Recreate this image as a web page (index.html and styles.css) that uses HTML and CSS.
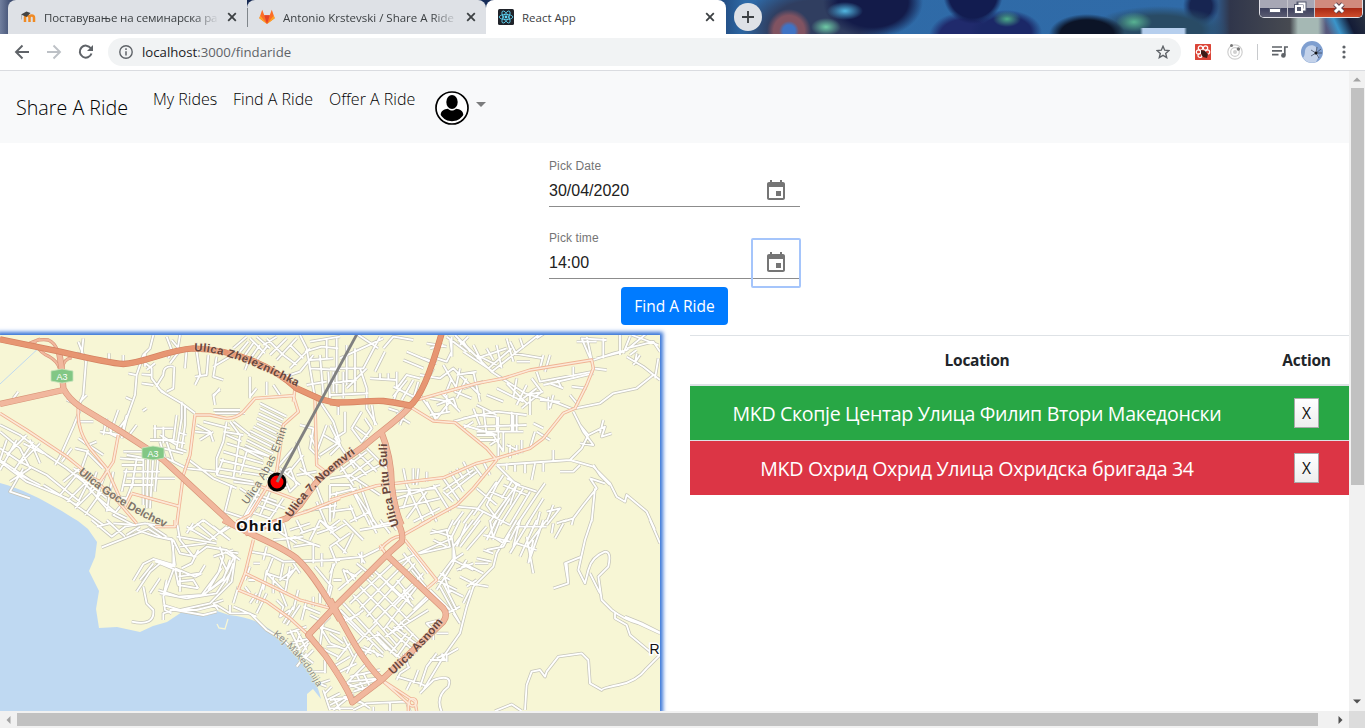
FILE: index.html
```html
<!DOCTYPE html>
<html lang="en">
<head>
<meta charset="utf-8">
<title>React App</title>
<link rel="stylesheet" href="styles.css">
</head>
<body>
<div class="window">
  <header class="tabstrip">
    <div class="tab tab-first">
      <svg class="favicon" viewBox="0 0 16 16"><path d="M5 13V8.800c0-3 4.500-3 4.500 0V13M9.500 8.800c0-3 4.500-3 4.500 0V13" fill="none" stroke="#f08a24" stroke-width="2.500"/><path d="M1 5.500 6.500 2.500l4 1.500-4 4z" fill="#444"/><path d="M1.500 5.500v5" stroke="#aaa" stroke-width=".8"/></svg>
      <span class="tab-title t1">Поставување на семинарска ра</span>
      <svg class="close" viewBox="0 0 10 10"><path d="M1.200 1.200 8.800 8.800M8.800 1.200 1.200 8.800"/></svg>
    </div>
    <div class="tab tab-second">
      <svg class="favicon" viewBox="0 0 16 16"><path d="M8 15 .3 9.300 3.200.800 5.300 6.300h5.400L12.800.800l2.900 8.500z" fill="#fc6d26"/><path d="m8 15 2.700-8.700H5.300z" fill="#e24329"/><path d="M8 15 .3 9.300l.9-2.800zM8 15l7.700-5.700-.9-2.800z" fill="#fca326"/></svg>
      <span class="tab-title t2">Antonio Krstevski / Share A Ride</span>
      <svg class="close" viewBox="0 0 10 10"><path d="M1.200 1.200 8.800 8.800M8.800 1.200 1.200 8.800"/></svg>
    </div>
    <div class="tab tab-active">
      <svg class="favicon" viewBox="0 0 16 16"><rect width="16" height="16" rx="1.500" fill="#20232a"/><g fill="none" stroke="#61dafb" stroke-width=".8"><ellipse cx="8" cy="8" rx="6.800" ry="2.600"/><ellipse cx="8" cy="8" rx="6.800" ry="2.600" transform="rotate(60 8 8)"/><ellipse cx="8" cy="8" rx="6.800" ry="2.600" transform="rotate(120 8 8)"/></g><circle cx="8" cy="8" r="1.400" fill="#61dafb"/></svg>
      <span class="tab-title t3">React App</span>
      <svg class="close" viewBox="0 0 10 10"><path d="M1.200 1.200 8.800 8.800M8.800 1.200 1.200 8.800"/></svg>
    </div>
    <div class="new-tab"><svg viewBox="0 0 12 12"><path d="M6 0v12M0 6h12"/></svg></div>
    <div class="controls">
      <span class="ctl"><svg width="27" height="17"><rect x="9.500" y="8.500" width="11" height="4" fill="#fff" stroke="#555a70"/></svg></span>
      <span class="ctl mid"><svg width="26" height="17"><path d="M10.500 3.500h6v6h-6zM8 6h6v6H8z" fill="#555a70" stroke="#555a70" stroke-width="4"/><path d="M10.500 3.500h6v6h-2M8 6h6v6H8z" fill="none" stroke="#fff" stroke-width="2"/></svg></span>
      <span class="ctl red"><svg width="47" height="17"><path d="m20 4 8 8M28 4l-8 8" stroke="#5f4650" stroke-width="5"/><path d="m20 4 8 8M28 4l-8 8" stroke="#fff" stroke-width="3"/></svg></span>
    </div>
  </header>

  <div class="toolbar">
    <svg class="nav-ico" viewBox="0 0 16 16"><path d="M15 8H2M8.500 1.500 2 8l6.500 6.500" fill="none" stroke="#5f6368" stroke-width="1.900"/></svg>
    <svg class="nav-ico" viewBox="0 0 16 16"><path d="M1 8h13M7.500 1.500 14 8l-6.500 6.500" fill="none" stroke="#bdc1c6" stroke-width="1.900"/></svg>
    <svg class="nav-ico" viewBox="0 0 16 16"><path d="M13.500 9.500A6 6 0 1 1 12.800 4.300" fill="none" stroke="#5f6368" stroke-width="2"/><path d="M15 1v6H9z" fill="#5f6368"/></svg>
    <div class="omnibox">
      <svg class="info" viewBox="0 0 14 14"><circle cx="7" cy="7" r="6.200" fill="none" stroke="#5f6368" stroke-width="1.400"/><path d="M7 6.200v4.200M7 3.300v1.700" stroke="#5f6368" stroke-width="1.500"/></svg>
      <span class="url"><b>localhost</b>:3000/findaride</span>
      <svg class="star" viewBox="0 0 14 14"><path d="m7 1.300 1.700 3.900 4.200.4-3.200 2.800 1 4.200L7 10.400l-3.700 2.200 1-4.200L1.100 5.600l4.200-.4z" fill="none" stroke="#5f6368" stroke-width="1.400"/></svg>
    </div>
    <svg class="ext-red" viewBox="0 0 16 16"><rect width="16" height="16" rx=".5" fill="#db4437"/><g fill="none" stroke="#fff" stroke-width="1.200"><circle cx="5.500" cy="4" r="2.200"/><circle cx="10.500" cy="4" r="2.200"/><circle cx="3.500" cy="8" r="2.200"/><circle cx="12.500" cy="8" r="2.200"/><circle cx="5" cy="11.500" r="2"/></g><path d="m6 6 4 1 3 3-1 4-4-1-2-3z" fill="#3c1c18"/></svg>
    <svg class="ext-orbit" viewBox="0 0 16 16"><circle cx="8" cy="8" r="7.200" fill="none" stroke="#cfcfcf" stroke-width="1.200"/><circle cx="8" cy="8" r="4.300" fill="none" stroke="#cfcfcf" stroke-width="1.200"/><circle cx="8" cy="8" r="2" fill="#d0d0d0"/><circle cx="4.500" cy="1.500" r="1.500" fill="#777"/><circle cx="11.400" cy="5" r="1.700" fill="#777"/></svg>
    <i class="sep"></i>
    <svg class="media" viewBox="0 0 16 12"><path d="M0 1h10M0 4.800h10M0 8.600h6.500M12.800 9V1H16" fill="none" stroke="#5f6368" stroke-width="1.700"/><circle cx="11.400" cy="9.400" r="2.300" fill="#5f6368"/></svg>
    <svg class="avatar" viewBox="0 0 22 22"><circle cx="11" cy="11" r="11" fill="#7f9fd0"/><path d="M2 17c3-4 1-7 3-10 2-3 7-4 10-1 2 3 0 5 3 9l-3 6c-5 2-10 0-13-4z" fill="#c3d2ea"/><path d="M15 12 10 9M15 12l-5 3M15 12l5-4M15 12l6 0M15 12l3 5M15 12l1-6" stroke="#333d55" stroke-width=".7"/><circle cx="15" cy="12" r="1.500" fill="#111"/></svg>
    <svg class="kebab" viewBox="0 0 4 14"><circle cx="2" cy="2" r="1.600"/><circle cx="2" cy="7" r="1.600"/><circle cx="2" cy="12" r="1.600"/></svg>
  </div>

  <div class="viewport">
    <main class="page">
      <nav class="navbar">
        <a class="brand">Share A Ride</a>
        <a class="link l1">My Rides</a>
        <a class="link l2">Find A Ride</a>
        <a class="link l3">Offer A Ride</a>
        <svg class="user" viewBox="0 0 34 34"><circle cx="17" cy="17" r="16" fill="#fff" stroke="#000" stroke-width="1.700"/><ellipse cx="17" cy="11" rx="5.700" ry="7"/><path d="M5.700 24c0-4 3.500-5.800 7.300-6.200 2 2.400 6 2.400 8 0 3.800.4 7.300 2.200 7.300 6.200-3 4.500-7 6.200-11.300 6.200S8.700 28.500 5.700 24z"/></svg>
        <i class="caret"></i>
      </nav>

      <form class="form">
        <div class="field"><label>Pick Date</label><span class="value">30/04/2020</span>
          <svg class="cal" viewBox="0 0 24 24"><path d="M17 12h-5v5h5v-5zM16 1v2H8V1H6v2H5c-1.110 0-1.990.9-1.990 2L3 19c0 1.100.89 2 2 2h14c1.100 0 2-.9 2-2V5c0-1.100-.9-2-2-2h-1V1h-2zm3 18H5V8h14v11z"/></svg></div>
        <div class="field"><label>Pick time</label><span class="value">14:00</span>
          <svg class="cal" viewBox="0 0 24 24"><path d="M17 12h-5v5h5v-5zM16 1v2H8V1H6v2H5c-1.110 0-1.990.9-1.990 2L3 19c0 1.100.89 2 2 2h14c1.100 0 2-.9 2-2V5c0-1.100-.9-2-2-2h-1V1h-2zm3 18H5V8h14v11z"/></svg><i class="focus"></i></div>
        <span class="submit">Find A Ride</span>
      </form>

      <section class="content">
        <div class="map">
<svg width="660" height="376" viewBox="0 335 660 376">
<defs>
<g id="streets">
 <!-- north-west -->
 <g transform="translate(0 325) scale(.33333)">
  <path d="M235 50l15 40 8 20-8 100-15 35M230 85l12 3M250 40l-5 50M460 30l-10 40-20 20-20 60-5 60-25 70-15 60M435 85v40M370 90v25M327 85v20M385 145l22 5M395 225l-18-8M500 35l15 40-10 25M540 30l-10 60M515 45l25 30-30 40M560 70l-5 60"/>
  <path d="M430 110l25 20v30l30 40 60 35 40 30M455 150l-30-2M425 175l35 5M520 125q-30-5-30 25l-22 35M500 200l20-10 3-65M475 190l20 15M440 135l25-20M590 80l10 70-15 30M625 90l-5 60-35 5M650 95l-10 60 30 10M690 95l-50 30M700 70l40-35M720 80l25-30M735 90l25-35M755 95l25-35M770 105l30-40M750 40l45 45M770 35l40 35M800 40l50 50M810 90l50-50M830 105l60-65M790 60l40-25M870 60l40 40M850 90l40 30M870 130l60-60M900 140l40-50M750 155v65M770 190l-20 25M800 170v40M820 180l20 30M750 95l-15 40"/>
  <path d="M900 30l20 40 10 60 15 90M930 50l90-15M915 80l50-15 50 5M980 40v60M1000 100l-70 5M930 130l90 5M960 90l10 120M985 140l5 80M1000 140v60M920 180l60-10M840 160l60-20M640 215l20-25M645 240l-5-30 20-15M545 230v50l-15 90 30 10M555 240v60l-10 70M530 270l-10 80M500 345l55 10M560 330l-25-8M465 300v40M490 305v50M460 310h60M450 345h70M640 255h80M645 265h90M440 250l-12 8"/>
  <path d="M585 320l50 5M590 300l40 20 10 30M600 345l40-25M610 290l80 20M680 290l-10 60-20 50v50M690 290l30 40M670 320l60 10M700 290l50 40M780 235l80 40M780 250l70 35M775 265l75 35M770 280l75 35M770 295l70 35M760 305l80 40M750 318l80 40M745 330l80 40M740 345l80 40M735 360l75 35M730 372l60 30M680 330l45 20M680 355l130 40M670 380l120 35M660 405l130 30M650 430l130 20M650 450l110 20M720 330l-20 130M740 380l-20 70M670 400l-20 50M700 470l80 10"/>
  <path d="M240 255l-20 50-40 90-15 25M215 370l-30 40M240 290h40M235 340l30 20 25-10M225 235l-25-10M40 220l15-20M265 375l-20 55M225 370l40 10M260 210l-20 20M355 255l-25 70 20 10M380 270l-15 60M325 290l10 40M300 320l60 10M320 280l-10 50M380 340l30-40M350 320l30-40M370 380h110M360 400l70 5M365 420h65M430 380v160M445 380l-5 170M460 390l-10 160M475 390l-10 110M380 390l60 10M410 400l-15 90M380 430l-15 70M370 440h110M380 460h145M370 480h90M490 370l60 15M500 400l40 20M480 350l15 50M500 350l20 60 40 20M560 400l80 60 70 30M560 430l90 10M480 330l50 30"/>
  <path d="M0 300l60 30 80 60 60 40 50 40 70 80 60 30M0 320l60 50 30 60-60 40M0 370l60 40 80 40 100 80M20 345l-20 60 90 60M50 345l-50 90M80 330l-60 60M100 350l-60 90 80 40M130 385l-60-30M90 345l30 70M120 355l-60 60M0 410l80 60 120 50 40 30 70 50M70 430l-40 70 60 20M130 480l100 60 40-80-50-30M180 510l50-60 60 40M200 530l60-60 60 50M225 550l60-60M255 570l50-70M240 430l-50 40M290 440l-20 60M320 435l-30 80 60 50M340 440l-20 120M380 520l-40 50 60 30M260 380l50 50M250 350l60 40M400 470l-20 50-60-10"/>
  <path d="M695 480l-20 80 60 20M720 490l60 40-40 60M750 500l80 30M790 430l40 20 40-20 20 50-20 20-20-50M800 460l60 30M780 490l-50 90M770 540l60 20M810 500l-30 70M850 520l-40 60M750 560l60 20M735 580l40-60 80 30M900 430l40 30 30 80M930 330l20 40M960 230l40 60 20 60M980 300l-30 80M890 350l30 100M900 300l40 10-10 60 30 30M970 330l50 30M960 390l60-40M890 450l60-10M860 450l50-60M830 430l50-60M900 480l-60-50M950 530l30 70M990 480v110M910 560l100-20"/>
 </g>
 <!-- north-east -->
 <g transform="translate(330 325) scale(.33333)">
  <path d="M0 130h100l50-95M20 40v165M85 30l60 40M30 100l130-60M50 60v120M0 175l80-10M0 210l115-5M90 130l20 60v60l30 50M110 130l-60 60M40 140v80M75 70v130M160 70l30-35 60 10M165 80l-30 60M120 160l80 5M150 145v20M175 145v20M200 140v50l30-40 40 10M190 215l40-50M190 185l60 30M200 200l-10 30 60 10M250 165l-35 60M265 170l-20 70M220 105l60 25M230 80l70 30M280 100l40 15M300 70l40-10M320 100l30 10 15-30-5-40M290 55l60 10M365 35v60M350 35l60 45"/>
  <path d="M375 30l110 110 100 65 100 30 50 20M400 80l90 60M485 140l140-110M440 100l90-30M430 60l30 60M470 70l20 35M500 60l15 70M475 130l70-60M530 40l20 70M560 90l-20-40M580 70l-10-30M550 85l90 15M560 110h40M620 40l30-20M440 90l60 30M390 60l25-25M385 45l50 45M420 80l-20-30M270 150l60 10 40-30 80 80M310 130l-30 60M340 120l40 70M365 160l-20 50M390 130l-15 70 50 20M410 160l-30 60M380 150l60-10M400 190l60-20M330 200l60 60M300 220l60 10-40 50M290 230l30 60M350 210v50M270 210l50 70M320 240l50-20 10 30M300 270l60-10M370 290l70-20 60 5M400 280l100-20 90 10M440 240l60 30M430 140l20 90M470 210l50 20M500 190l80 40M530 175l60 60M560 160l-10 60M590 180l-30 60M620 190l-40 30M640 200l-50 10M605 160l30 40-60 50M600 210v60M630 225l60 5M655 215v40M670 210l-10 40"/>
  <path d="M440 305l150-5M500 275v45h60v-50M550 270v50M505 275v130M440 320h140M520 320v60M545 260v60M400 300l100 30M440 330h50M450 345h45M490 330l30 50M530 360l40 20M540 360v40M560 360v30M575 345v40M600 370l15-50M640 310l-30-15M660 345l-40-25M430 250l20 50M460 250l10 80M400 310l30-20M480 360l30-20M620 140l10 30 160-30M660 90l-15 50M640 90l-10 40M730 125v30M640 180l150-35M660 175l40 15M680 160l15 30M725 185l45 5M720 210l25 30M790 130l40 5M785 110l-30-70 75 5M770 35l15 70M740 50h60M820 40v60M790 105l60-20 40-10 60-50M800 100l80-20M870 30v60M890 70l80-20 20 30M900 35l-20 50M905 30l80 30M890 95l50 30 50 40M900 90l20-15M915 115l5-30M985 100l-10 60M970 150l-50 40-70 15-40 30-75 15M930 90l-20 30"/>
  <path d="M730 260l30 60 30 40-40-5M750 300l25 30 50-25-10 30 30-10M820 285l-10 40M775 330l-20 40-35 35-220 15M670 375v35M690 440h40l20-20M640 410v30M615 415l-10 50M585 415v30M555 420v20M530 415v20M720 405l70 20 50 50 20 40 25 15 5-20 60 50 25 55M790 420l20 30 30 30M780 460l45 15M780 460l20 30-40 50-30 40-5 20M795 490l-10 100M700 590l30-10M500 420l60 60 60 20M520 450l-20 30M530 460l40 20M520 480l70 30M560 480l-20 60M545 470l-30 50M620 510l25-35M620 510l-60 90M600 500l-60 100M640 520l-50 80M580 490l-70 110M560 480l-80 110M540 520l-50 80M500 480l-30 60 30 40M480 500l50 20M430 570l70-100M440 490l60 50M380 545l60 5 100 50M400 560l-30 40M430 555l-30 40M460 560l-30 40M650 560l40-10-40 50M670 540l-20 50M630 560l-10 40"/>
  <path d="M0 300l30 60-30 30M45 260v60l-30 20 60 90M65 310l30-50M65 310l30 40 30-40-20-30M75 305l40 30M25 240v30M125 240l10 60M175 250l30 10M200 270l40-30M200 270l40 25M210 300l15-40M110 370l60 60M80 380l60 60M60 400l50 50M30 420l40 60M110 380l-80 60M130 400l-80 60M150 420l-90 50M0 460l60-10 90 60M0 480h60l80 120M0 510l80-20M60 480l60 120M60 540l20 50M90 480l40 110M0 560l70-10M120 560l-60 30M20 500l-10 80M220 430l10 50 50 110M250 430v50M265 430l-5 50M290 440v30M200 520l130-40M200 550l130-30M190 500l130-10M270 490l50 100M310 480l50 80M340 500l30 30M240 490l-20 60M290 500l-60 80M250 590l80-40M340 495l90-60M350 510l90-70M340 460l50 70M360 440l40 60M380 430l20 30M400 410l20 40M430 420l30 40M460 410l20 40"/>
 </g>
 <!-- south-west -->
 <g transform="translate(0 520) scale(.33333)">
  <path d="M275 0l60 50 40-30 60-10 60 10M305 82l140-55 40 25 30 5 10 80M320 0l55 50M340 10l70 5M290 20l40-10M380 45l40-25M410 30l60 20 50 10M440 10l60 40M530 0l10 60 40 50 40-30 60 10 40 30M530 50l120 20M560 20l70 40 50-40M590 10l60 50M610 0l80 60M520 60l20 40 50 10M540 80l80-10M570 30l40-30M640 20l50 40M660 40l30-20M520 75v60l-60-18-30 15-30 50M460 130l-40 50M410 215l40-60 30-25 60 25v60M525 145l10 50 60 10M525 145l60 25 20-10M520 150l-30 80 5 40 20 10M500 180l-10 50M480 175l-20 30-10 15M430 200l10 50 20 20q5 50-65 35M480 220l30 5 50 10 50-10 60-50 30-60M530 185l50-5 15 25M615 135l-15 25-65 10M660 80l10 30-15 50-30 50M675 95l30 20-10 70-50 50M690 95l25 5M640 110l60-20M690 120l-20 60-40 30M700 130l-20 60M690 160l-40 60-60 10M660 110l20 40M650 230l-20 20-90 20-50-15M670 240l-30 10 15 20M525 270l85 15 40-10M510 270h80l60-15M525 140l-60-15M475 210l60 20 70-5 60-80M545 145l30-15 20-40M700 250l15-50M690 255v25l60 0 50 50 50 30M700 260l70 30M650 255l40 25M490 300v-20l30-10M560 40l20-30"/>
  <path d="M750 95l60 10 40 20 170-5M800 80l-10 40M820 60l90-10M830 30l60 40M850 10l20 80M870 30l60-20M880 80l60-10M890 0l20 40M900 40l60-20M880 50l80 30M930 60l30-60M940 70v60M965 100v40M990 80l20 50M950 40l60-20M960 0l60 60M980 30l40-30M1000 30l-40-30M780 130h-20M820 110l-20 50 60 20 30-40M800 150l-10 60M800 160l60 60M850 130l-10 50 40-30M870 140l-15 80M750 140l-15 40M745 180l20 0M750 220l-15-20M790 190l-20 60M820 170v50M840 210l20 50M770 220l-20 30M800 220l-30 60M830 240l20 20-10 30 30-20M880 130l20 30M895 210l-15 60M880 260l-30 50M900 255l-40 60M920 240l-15 60M910 260l50 20M940 230v30M960 220v30M945 140l50 60-15 60M1000 130l-20 110M930 285l40 20-10 70M990 290l-30 30 30 50M960 320l60 20M980 380l40 0M955 380l60 30M860 340l60-20M840 350l30 30M870 330l30 60M890 330l30 60M870 370l60-15M880 400l60-50M910 420l30-30M920 400l-30 40M940 430l-40-30M900 340l-20 60M925 370l-20 30M975 420v40M930 455h45M980 500l-25-10M975 520l20-20M980 540l40-20M970 510l20 60M1000 530l20 40M960 490l30-10"/>
 </g>
 <!-- south-east -->
 <g transform="translate(330 520) scale(.33333)">
  <path d="M0 40l50-30M40 0l60 60M0 80l60-40M20 70l30 30M70 40l-30 60M0 120l100-10 60-30M95 95v35M85 100l20 30M120 0l20 40M150 0l30 40M180 0l20 30M130 20l80-20M90 30l120-20M0 160l15-30M10 180h25M50 150l25 30M55 190l-15-40 40 20M80 130l50 40M25 210l70-60M50 230l100-110M60 250l140-130M90 265l150-150M110 290l145-160M130 310l150-150M130 150l120 110M110 175l130 130M90 200l130 130M70 225l130 150M40 250l130 140M30 270l130 130M160 330l100-130M180 340l120-110M165 350l130-80M170 190l40 40M200 180l50 60M250 200l-60 60M240 250l-20-40M250 270l50-50M140 335l60 60M140 350l60 60M150 370l70 50M170 320l90 80M190 320l80 60M200 410l50-70M180 400l50-60M220 420l40-50M210 305l60 60M110 360l40-20M130 370l-30 40M130 390l15 20M100 380l60 30M40 290l60 60M30 310l60-30M60 300l40-30M80 370l60-60"/>
  <path d="M220 100l60 80M245 150l50 60M260 100l-60 30M235 80l60 80M265 100l90-40M300 40l50-10 10 50-90 20M310 60l40 20M305 30l60 20 10 60-60 80M370 0l-20 40M390 0l-30 60M430 0l-60 80v50l-50 80M450 0l-60 80M410 10l-30 70M470 20l-60 70M500 0l-30 60M480 0l10 60M460 45l80 20M510 0l-20 50 30 20M540 40l-20 40-50 10M560 0l-60 100-10 40-60 60-20 60-20 80-50 70-60 100M490 100l-30-10M485 125l-45-10M460 160l-60-30M430 130l-50 20M400 100l-30 20 60 30M410 120l-20 30M435 130h40M390 170l40 20M420 190l55 10M440 180l-30 20M400 230l-40-20M420 210l-20 40M330 200l60 110M340 190l40 80M340 160l20 60M360 180l-30-20M390 260l-40 20M300 210l60 60M320 180l60 30M390 310l-20-30M320 340h35M310 360v-30l-20-20 40-10M300 420l45 0-10-20M350 425v-20l35-20M350 400l-30 15M270 500l20-60 30-40M200 470l70 20 20 10M230 510l15-30M265 450l-15 40M240 440l-30 20-10 20M220 400l15 40M270 520l40-40q60-20 45 20-40 30-20 75M110 430l-60 60 50 20M60 470l90-20M55 485l90-10M60 500l80-20M70 515l60-20M80 465l20 40M100 460l20 40M70 570l40-20 120-5M100 550l-60-20M130 560v20M180 550v25M230 545l10 30M0 555l60-30 60 40M0 565h70M0 540l70-10M10 570l60-50M0 340l40 30M0 370l50 20M40 350l30 60M60 370l-40 50M10 440l50-30M20 460l60-30M80 400l-30 60M75 380l50 20"/>
  <path d="M600 0l-60 100M620 0l-50 110M640 0l-45 130M570 0l-20 80M590 50l20 110M610 60l-15 70M650 0l-60 80M620 90l-60-20M540 60l20-40 90 0M670 10l-5 30M700 10l-25 45M680 10l30-10M785 0l-20 60-20 90 20 40 10-40q10-40 50-55 20 0 10 45l-30 30 10 70 30 30q40 30 80 40l65 30M755 110l-50 20 10 60-45 15M710 130l5 60M780 160l30 60M855 280v15l35 20 10 30 60 50M885 290l50 20 60 30M960 0l30 70M990 405l-40 40q-30 40-85 50-50 10-50 15l-35-20-5-70-20-20-70 10-35 45-5 15-15-20-25 5-15 40-5 75M495 573l50-20 30 20"/>
 </g>
</g>
<g id="locals">
 <g transform="translate(0 325) scale(.33333)"><path d="M0 265l80 50 120 80 50 40 100 90 60 70M235 245c-5 60 15 95 35 125l50 60 40 90M355 330l-15 80-40 60-60-30M585 270l-15 120-20 60-20 150M585 270h45l50 10q30 0 50-20l35-40 115-8 15 48-45 40-20 140-80 130-40 20M885 190l-5 40M945 225l5 195 40 30M770 480l120 45M790 600l130-40 100-40M395 505l145 40M395 505l-20 40"/></g>
 <g transform="translate(330 325) scale(.33333)"><path d="M0 525l140-43 200-24 100-43 60-15 100-30 40-30 60-75 35-15 35-70 20-50-5-25-185 30-80 25-80 15-110 30-70 20M240 245l70 43 65 5 95 77 30 35-70 85-50 50-110 60"/></g>
 <g transform="translate(0 520) scale(.33333)"><path d="M760 60l-25 100-20 50M735 160l165 80 110 30M715 210l85 35 70 50 55 50M525 0v20h-60"/></g>
 <g transform="translate(330 520) scale(.33333)"><path d="M220 45L300 0M225 60l95 120-35 30M150 90q30-40 65-42M150 75l20 30M155 480l80 70v25M155 480l100 65 5 28"/><circle cx="248" cy="547" r="11"/></g>
</g>
<g id="ramps"><g transform="translate(0 325) scale(.33333)"><path d="M80 60q30-20 65-15c35 15 33 65 38 85M105 58q-5-10 15-16M108 60q15 25 40 35 25 15 30 35M215 98q-25 5-27 30"/></g></g>
<g id="arterials">
 <g transform="translate(0 325) scale(.33333)"><path d="M0 237l190-42M178 85l7 45 5 60q15 30 50 55l120 73 80 52 50 35 210 195M1000 430c-50 30-70 70-100 110l-40 40-125 45"/></g>
 <g transform="translate(330 325) scale(.33333)"><path d="M240 245c-40 45-90 75-140 120L0 435M152 315c18 45 33 105 33 165 5 50 20 100 30 120"/></g>
 <g transform="translate(0 520) scale(.33333)"><path d="M670 0l90 45q90 40 130 70c50 45 100 135 130 185"/></g>
 <g transform="translate(330 520) scale(.33333)"><path d="M0 238c60 112 95 182 155 242M205 10c10 20 15 40 10 55l-45 40L20 255l-85 90 50 60C30 470 60 520 67 547l88-67 185-175q15-20 0-40L170 105"/></g>
</g>
<g id="trunk">
 <g transform="translate(0 325) scale(.33333)"><path d="M0 43l180 37q150 35 190 37c60-2 130-42 210-47 120 5 220 40 310 120l70 32 60 15"/></g>
 <g transform="translate(330 325) scale(.33333)"><path d="M0 232c60 3 120-7 160-4 40 4 60 10 80 14 30-22 60-92 95-217"/></g>
</g>
<path id="p1" d="M194 351C222 352 252 363 305 391"/>
<path id="p2" d="M78 473C103 495 130 512 168 529"/>
<path id="p3" d="M247 505Q275 470 288 424"/>
<path id="p4" d="M291 518C310 490 330 472 359 451"/>
<path id="p5" d="M399 525Q386 490 387 438"/>
<path id="p6" d="M273 635Q300 655 319 690"/>
<path id="p7" d="M393 675Q419 652 445 620"/>
</defs>
<rect x="0" y="335" width="660" height="376" fill="#f7f6d5"/>
<path d="M0 384 42 345" stroke="#bfd9ef"/>
<path d="M0 483C28 490 57 508 78 521l10 8 9 13-2 15-6 14 10 20-3 18 3 19 18-1 23 5 13-6 14-4 15-10 24 4 11-5 12 4c31 3 46 16 65 36 15 16 25 36 27 48l-8-10-6 5v17H0z" fill="#bfd9f2"/>
<path d="M217 624l2 4 6 1 3-10" fill="none" stroke="#f7f6d5" stroke-width="1.300"/>
<use href="#streets" class="street-edge"/><use href="#streets" class="street-fill"/>
<use href="#locals" class="local-edge"/><use href="#locals" class="local-fill"/>
<use href="#ramps" class="ramp-edge"/><use href="#ramps" class="ramp-fill"/>
<use href="#arterials" class="art-edge"/><use href="#arterials" class="art-fill"/>
<use href="#trunk" class="trunk-edge"/><use href="#trunk" class="trunk-fill"/>
<g class="shield"><path d="m51 371 11-2 11 2v10l-11 2-11-2zM142 448l11-2 11 2v10l-11 2-11-2z"/><text x="62" y="380">A3</text><text x="153" y="457">A3</text></g>
<g class="road-names">
 <text class="dark"><textPath href="#p1" textLength="110">Ulica Zheleznichka</textPath></text>
 <text><textPath href="#p2" textLength="103">Ulica Goce Delchev</textPath></text>
 <text class="thin"><textPath href="#p3" textLength="87">Ulica Abas Emin</textPath></text>
 <text class="dark"><textPath href="#p4" textLength="92">Ulica 7. Noemvri</textPath></text>
 <text class="dark"><textPath href="#p5" textLength="83">Ulica Pitu Guli</textPath></text>
 <text class="thin small"><textPath href="#p6" textLength="69">Kej Makedonija</textPath></text>
 <text class="dark"><textPath href="#p7" textLength="73">Ulica Asnom</textPath></text>
</g>
<text class="city" x="236" y="531" textLength="46">Ohrid</text>
<text class="village" x="649.500" y="654">R</text>
<circle cx="277" cy="482" r="8" fill="#f00" stroke="#000" stroke-width="3"/>
<path d="M277 482 357 334" stroke="#808080" stroke-width="2.800"/>
</svg>
        </div>
        <table class="places">
          <thead><tr><th class="where">Location</th><th>Action</th></tr></thead>
          <tbody>
            <tr class="from"><td class="addr">MKD Скопје Центар Улица Филип Втори Македонски</td><td><span class="remove">X</span></td></tr>
            <tr class="to"><td class="addr">MKD Охрид Охрид Улица Охридска бригада 34</td><td><span class="remove">X</span></td></tr>
          </tbody>
        </table>
      </section>
    </main>
    <div class="vbar"><svg class="arr" viewBox="0 0 8 5"><path d="M0 4.500 4 .5l4 4z" fill="#a3a3a3"/></svg><i class="vthumb"></i><svg class="arr" viewBox="0 0 8 5"><path d="M0 .5h8l-4 4z" fill="#505050"/></svg></div>
    <div class="hbar"><svg class="arh" viewBox="0 0 5 8"><path d="M4.500 0v8l-4-4z" fill="#a3a3a3"/></svg><i class="hthumb"></i><svg class="arh" viewBox="0 0 5 8"><path d="M.5 0v8l4-4z" fill="#505050"/></svg></div>
    <div class="corner"></div>
  </div>
</div>
</body>
</html>
```

FILE: styles.css
```css
* { box-sizing: border-box; }
body { margin: 0; background: #fff; font-family: "Open Sans", "Noto Sans", sans-serif; color: #212529; overflow: hidden; }
svg { display: block; flex: none; }
.window { width: 1365px; height: 728px; display: flex; flex-direction: column; overflow: hidden; }

/* Tab strip over the desktop wallpaper */
.tabstrip {
  height: 34px; flex: none; display: flex; padding-left: 8px;
  background:
    radial-gradient(ellipse 18px 9px at 845px 11px, #52b8e2, transparent),
    radial-gradient(ellipse 15px 9px at 826px 27px, #6fcba6, transparent),
    radial-gradient(circle 10px at 789px 31px, #3f73c4 60%, transparent),
    radial-gradient(circle 22px at 789px 31px, #815361 70%, transparent),
    radial-gradient(ellipse 50px 36px at 873px 2px, #131b49 70%, transparent),
    radial-gradient(ellipse 75px 46px at 815px 28px, #303e60 60%, transparent),
    radial-gradient(circle 30px at 973px -6px, #121c50 80%, transparent),
    radial-gradient(ellipse 14px 8px at 1007px 19px, #4cab88, transparent),
    radial-gradient(ellipse 36px 22px at 1006px 32px, #1b2867 70%, transparent),
    radial-gradient(ellipse 36px 24px at 965px 36px, #202a6c 70%, transparent),
    radial-gradient(ellipse 38px 20px at 1087px 34px, #0c1427 70%, transparent),
    linear-gradient(90deg, transparent 1140px, #b6cfee 1143px, #b6cfee 1184px, transparent 1187px) 0 28px / 100% 6px no-repeat,
    radial-gradient(ellipse 18px 10px at 1134px 22px, #58b292, transparent),
    radial-gradient(ellipse 70px 24px at 1160px 30px, #294b65 60%, transparent),
    radial-gradient(ellipse 18px 20px at 1201px 6px, #172551 60%, transparent),
    linear-gradient(65deg, transparent 1205px, #3b95ca 1215px, #141c37 1228px, #303844 1250px, #3b4350 1284px, transparent 1285px),
    linear-gradient(90deg, #717f9e 0, #16254c 20px, #17305e 700px, #2e6aa7 745px, #306ba8 1210px, #30364b 1230px, #474a51 1290px, #a5b8b4 1298px, #a5b8b4 1318px, #57597d 1326px, #5c5d83 1365px);
}
.tab { display: flex; align-items: center; height: 34px; background: #dee1e6; padding: 0 10px 0 12px; }
.tab-first { width: 239px; border-top-left-radius: 8px; position: relative; }
.tab-first::after { content: ""; position: absolute; right: -1px; top: 8px; width: 1px; height: 19px; background: #80868b; }
.tab-second { width: 239px; border-radius: 8px 8px 0 0; }
.tab-active { width: 240px; background: #fff; border-radius: 8px 8px 0 0; }
.favicon { width: 16px; height: 16px; }
.tab-title { flex: 1; margin-left: 8px; font-size: 11.5px; line-height: 17px; white-space: nowrap; overflow: hidden; color: #3c4043; }
.t1 { letter-spacing: -.13px; }
.t1, .t2 { -webkit-mask-image: linear-gradient(90deg, #000 calc(100% - 26px), transparent); mask-image: linear-gradient(90deg, #000 calc(100% - 26px), transparent); margin-right: 8px; }
.close { width: 10px; height: 10px; fill: none; stroke: #3c4043; stroke-width: 1.8; }
.tab-active .close { margin-right: 1px; }
.new-tab { width: 28px; height: 28px; margin: 3px 0 0 8px; border-radius: 50%; background: #dee1e6; display: grid; place-items: center; }
.new-tab svg { width: 12px; height: 12px; stroke: #3c4043; stroke-width: 1.9; }
.controls { margin-left: auto; margin-right: 2px; height: 18px; display: flex; border: 1px solid #e0e0e7; border-top: 0; border-radius: 0 0 5px 5px; overflow: hidden; }
.ctl { height: 17px; background: linear-gradient(#a7a7b5 45%, #3c3f5c 50%, #5a5c72); }
.mid { border-left: 1px solid #c4c4cc; border-right: 1px solid #c4c4cc; }
.red { background: linear-gradient(#d18b7d 45%, #a92a15 50%, #cf4d2c); }

/* Toolbar */
.toolbar { height: 37px; flex: none; display: flex; align-items: center; background: #fff; border-bottom: 1px solid #dadce0; padding-left: 14px; }
.nav-ico { width: 16px; height: 16px; margin-right: 16px; }
.omnibox { width: 1073px; height: 28px; margin-left: -2px; border-radius: 14px; background: #f1f3f4; display: flex; align-items: center; padding: 0 11px 0 11px; }
.info { width: 14px; height: 14px; }
.url { margin-left: 9px; flex: 1; font-size: 13.2px; color: #5f6368; }
.url b { font-weight: 400; color: #202124; }
.star { width: 14px; height: 14px; }
.ext-red { width: 16px; height: 16px; margin-left: 14px; }
.ext-orbit { width: 16px; height: 16px; margin-left: 16px; }
.sep { width: 1px; height: 16px; margin-left: 14px; background: #c8cacd; }
.media { width: 16px; height: 12px; margin-left: 14px; }
.avatar { width: 22px; height: 22px; margin-left: 13px; }
.kebab { width: 4px; height: 14px; margin-left: 19px; fill: #5f6368; }

/* Scrolled viewport */
.viewport { flex: 1; min-height: 0; display: grid; grid-template: 640px 17px / 1349px 16px; }
.page { overflow: hidden; }
.navbar { height: 72px; background: #f8f9fa; display: flex; align-items: flex-start; padding-left: 16px; white-space: nowrap; font-weight: 300; color: #000; }
.brand { width: 137px; padding-top: 23px; font-size: 19.7px; line-height: 28px; }
.link { padding-top: 16px; font-size: 16px; line-height: 24px; }
.l1 { width: 80px; }
.l2 { width: 96px; }
.l3 { width: 106px; }
.user { width: 34px; height: 34px; margin-top: 20px; }
.caret { margin: 31px 0 0 7px; border: 5px solid transparent; border-top-color: #7b7c7d; border-bottom: 0; }
.form { padding: 16px 0 10px; display: flex; flex-direction: column; align-items: center; }
.field { position: relative; width: 251px; height: 48px; margin-bottom: 24px; border-bottom: 1px solid #8c8c8c; display: grid; grid-template: 16px 31px / 215px 24px; font-family: "Liberation Sans", Arial, sans-serif; }
.field label { grid-column: 1 / 3; font-size: 12px; line-height: 15px; color: #757575; letter-spacing: .11px; }
.value { font-size: 16px; line-height: 31px; color: #212121; }
.cal { width: 24px; height: 24px; margin-top: 4px; fill: #757575; }
.focus { position: absolute; left: 202px; top: 7px; width: 50px; height: 50px; border: 2px solid #a5c5fb; border-radius: 2px; }
.submit { width: 107px; height: 38px; margin-top: -16px; border-radius: 4px; background: #007bff; color: #fff; font-size: 15.5px; line-height: 38px; text-align: center; }
.content { display: flex; align-items: flex-start; gap: 30px; }
.map { width: 660px; height: 376px; box-shadow: 0 0 4px 3px #3875d7; }
.places { width: 659px; border-collapse: separate; border-spacing: 0; table-layout: fixed; text-align: center; }
.places th { height: 51px; width: 85px; padding: 0; border-top: 1px solid #dee2e6; border-bottom: 2px solid #dee2e6; font-size: 15.5px; font-weight: 700; letter-spacing: -.25px; }
.places th.where { width: 574px; }
.places td { height: 54px; padding: 0; color: #fff; font-size: 19.6px; white-space: nowrap; }
.places .addr { padding-top: 1px; letter-spacing: -.34px; }
.from td { background: #28a745; }
.places .to td { height: 55px; background: #dc3545; border-top: 1px solid #dee2e6; }
.remove { display: block; margin: 0 auto; width: 25px; height: 30px; border: 1px solid #aaa; background: linear-gradient(#fff, #eee); color: #111; font-size: 15.5px; line-height: 28px; }

/* Scrollbars */
.vbar { background: #f1f1f1; display: flex; flex-direction: column; align-items: center; padding: 6px 0 7px; }
.arr { width: 8px; height: 5px; }
.vthumb { width: 13px; height: 397px; margin: 6px 0 auto 1px; background: #c1c1c1; }
.hbar { background: #f1f1f1; display: flex; align-items: center; padding: 0 6px; }
.arh { width: 5px; height: 8px; }
.hthumb { width: 1301px; height: 13px; margin: 0 auto 0 6px; background: #c1c1c1; }
.corner { background: #dcdcdc; }

/* Map */
use { fill: none; stroke-linejoin: round; stroke-linecap: butt; }
.street-edge { stroke: #c6c5b9; stroke-width: 10px; }
.street-fill { stroke: #fff; stroke-width: 5.5px; }
.local-edge { stroke: #f0b394; stroke-width: 10px; }
.local-fill { stroke: #fce9d8; stroke-width: 5px; }
.ramp-edge { stroke: #d89478; stroke-width: 10px; }
.ramp-fill { stroke: #f1b79d; stroke-width: 6px; }
.art-edge { stroke: #d89478; stroke-width: 19px; }
.art-fill { stroke: #f1b79d; stroke-width: 15px; }
.trunk-edge { stroke: #d48160; stroke-width: 19px; }
.trunk-fill { stroke: #e79672; stroke-width: 15px; }
.shield path { fill: #82c785; stroke: #c9e4bd; stroke-width: .8px; }
.shield text { fill: #fff; font: 9px "Liberation Sans", sans-serif; text-anchor: middle; }
.road-names text { font: bold 11.5px "Liberation Sans", sans-serif; fill: #80756b; stroke: rgba(247,246,213,.5); stroke-width: 1.5px; paint-order: stroke; }
.road-names .dark { fill: #68473d; stroke: rgba(247,220,195,.4); }
.road-names .thin { font-weight: 400; font-size: 11px; fill: #77736d; }
.road-names .small { font-size: 9.5px; fill: #8b8b85; }
.city { font: bold 15px "Noto Sans", sans-serif; fill: #111; stroke: #fff; stroke-width: 3px; paint-order: stroke; }
.village { font: 14px "Liberation Sans", sans-serif; fill: #111; stroke: #fff; stroke-width: 3px; paint-order: stroke; }
```
